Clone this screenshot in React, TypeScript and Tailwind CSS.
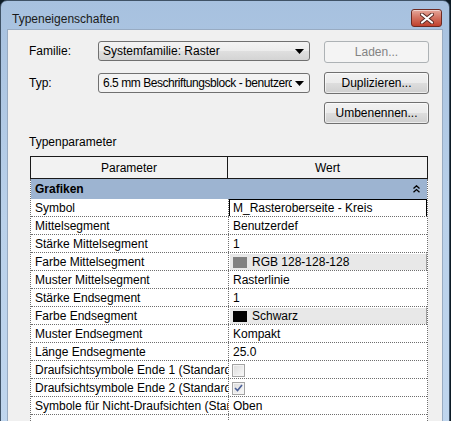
import React from "react";

function CloseButton() {
  return (
    <div className="w-[31px] h-[18px] rounded-[3px] border border-[#6d2a22] bg-gradient-to-b from-[#e5a89c] via-[#d2705f] to-[#c0402c] flex items-center justify-center shadow-[inset_0_1px_0_rgba(255,255,255,0.5)]">
      <svg width="14" height="11" viewBox="0 0 14 11">
        <path d="M2 1.5 L12 9.5 M12 1.5 L2 9.5" stroke="#5a2a24" strokeWidth="4" strokeLinecap="round" />
        <path d="M2 1.5 L12 9.5 M12 1.5 L2 9.5" stroke="#ffffff" strokeWidth="2.2" strokeLinecap="round" />
      </svg>
    </div>
  );
}

function Arrow() {
  return (
    <svg width="9" height="5" viewBox="0 0 9 5" className="shrink-0">
      <path d="M0 0 H9 L4.5 5 Z" fill="#000" />
    </svg>
  );
}

function Btn({ children, disabled }: { children: React.ReactNode; disabled?: boolean }) {
  if (disabled) {
    return (
      <div className="w-[105px] h-[22px] rounded-[3px] border border-[#adb2b5] bg-[#f4f4f4] flex items-center justify-center text-[#838383]">
        {children}
      </div>
    );
  }
  return (
    <div className="w-[105px] h-[22px] rounded-[3px] border border-[#707070] bg-[linear-gradient(to_bottom,#f2f2f2_0%,#ebebeb_50%,#dddddd_51%,#cfcfcf_100%)] flex items-center justify-center shadow-[inset_0_0_0_1px_rgba(255,255,255,0.6)]">
      {children}
    </div>
  );
}

function Row({ name, children }: { name: string; children?: React.ReactNode }) {
  return (
    <div className="flex h-[18px] border-b border-dotted border-[#6e6e6e]">
      <div className="w-[198px] shrink-0 border-r border-dotted border-[#6e6e6e] pl-[4px] leading-[18px] overflow-hidden whitespace-nowrap">
        {name}
      </div>
      <div className="flex-1 min-w-0 whitespace-nowrap overflow-hidden">{children}</div>
    </div>
  );
}

function Val({ text }: { text: string }) {
  return <div className="pl-[4px] leading-[18px]">{text}</div>;
}

function ColorVal({ color, text }: { color: string; text: string }) {
  return (
    <div className="h-[17px] bg-[#e8e8e8] border-t border-l border-white border-r border-r-[#a0a0a0] flex items-center pl-[3px] gap-[5px]">
      <div className="w-[14px] h-[11px]" style={{ background: color }} />
      <span className="leading-[17px] mt-[1px]">{text}</span>
    </div>
  );
}

function Check({ checked }: { checked?: boolean }) {
  return (
    <div className="h-[17px] flex items-center pl-[3px] pt-[1px]">
      <div className="w-[13px] h-[13px] border border-[#a4a4a4] bg-[#f4f4f4] p-[1px]">
        <div className="w-full h-full bg-gradient-to-br from-[#dedede] to-[#f7f7f7] flex items-center justify-center">
          {checked && (
            <svg width="9" height="8" viewBox="0 0 9 8">
              <path d="M1 4 L3.5 6.5 L8 1" stroke="#4a5f97" strokeWidth="1.6" fill="none" />
            </svg>
          )}
        </div>
      </div>
    </div>
  );
}

export default function App() {
  return (
    <div className="w-[451px] h-[421px] overflow-hidden bg-[#0d1b26] font-['Liberation_Sans',Arial,sans-serif] text-[12px] text-black">
      <div className="w-[450px] h-[440px] rounded-t-[7px] border border-[#3f5266] bg-gradient-to-b from-[#a7c1df] via-[#bad1ea] to-[#c0d6ee] flex flex-col">
        <div className="h-[28px] shrink-0 flex items-start pt-[8px] pl-[11px] pr-[7px]">
          <span className="flex-1 leading-[16px] mt-[2px] text-[#1a1a1a]">Typeneigenschaften</span>
          <CloseButton />
        </div>
        <div className="mx-[6px] flex-1 border border-[#98abc2] bg-[#f0f0f0] flex flex-col pl-[21px] pt-[11px]">
          <div className="flex items-start h-[22px]">
            <div className="w-[69px] leading-[20px]">Familie:</div>
            <div className="w-[212px] h-[20px] rounded-[3px] border border-[#707070] bg-[linear-gradient(to_bottom,#f3f3f3_0%,#ececec_50%,#dfdfdf_51%,#d4d4d4_100%)] flex items-center pl-[4px] pr-[5px]">
              <span className="flex-1">Systemfamilie: Raster</span>
              <Arrow />
            </div>
            <div className="ml-[14px]">
              <Btn disabled>Laden...</Btn>
            </div>
          </div>
          <div className="flex items-start h-[22px] mt-[9px]">
            <div className="w-[69px] leading-[22px]">Typ:</div>
            <div className="w-[212px] h-[20px] mt-[1px] rounded-[3px] border border-[#707070] bg-[#f3f3f3] flex items-center pl-[4px] pr-[5px]">
              <span className="flex-1 overflow-hidden whitespace-nowrap tracking-[-0.45px]">6.5 mm Beschriftungsblock - benutzerdefiniert</span>
              <div className="w-[12px] flex justify-end">
                <Arrow />
              </div>
            </div>
            <div className="ml-[14px]">
              <Btn>Duplizieren...</Btn>
            </div>
          </div>
          <div className="flex mt-[8px] pl-[295px]">
            <Btn>Umbenennen...</Btn>
          </div>
          <div className="mt-[10px] leading-[16px]">Typenparameter</div>
          <div className="mt-[6px] ml-[1px] w-[398px] flex flex-col">
            <div className="flex h-[23px] border border-[#1a1a1a] bg-[#f2f2f2]">
              <div className="w-[197px] border-r border-[#1a1a1a] flex items-center justify-center">Parameter</div>
              <div className="flex-1 flex items-center justify-center">Wert</div>
            </div>
            <div className="flex flex-col border-l border-r border-dotted border-[#6e6e6e] bg-white">
              <div className="h-[20px] bg-[#9db4d1] flex items-center pl-[4px] pr-[7px]">
                <span className="flex-1 font-bold">Grafiken</span>
                <svg width="7" height="8" viewBox="0 0 7 8">
                  <path d="M0.5 3.5 L3.5 0.8 L6.5 3.5 M0.5 7.2 L3.5 4.5 L6.5 7.2" stroke="#000" strokeWidth="1.3" fill="none" />
                </svg>
              </div>
              <Row name="Symbol">
                <div className="h-[18px] border border-black pl-[3px] leading-[16px]">M_Rasteroberseite - Kreis</div>
              </Row>
              <Row name="Mittelsegment"><Val text="Benutzerdef" /></Row>
              <Row name="Stärke Mittelsegment"><Val text="1" /></Row>
              <Row name="Farbe Mittelsegment"><ColorVal color="#808080" text="RGB 128-128-128" /></Row>
              <Row name="Muster Mittelsegment"><Val text="Rasterlinie" /></Row>
              <Row name="Stärke Endsegment"><Val text="1" /></Row>
              <Row name="Farbe Endsegment"><ColorVal color="#000000" text="Schwarz" /></Row>
              <Row name="Muster Endsegment"><Val text="Kompakt" /></Row>
              <Row name="Länge Endsegmente"><Val text="25.0" /></Row>
              <Row name="Draufsichtsymbole Ende 1 (Standard)"><Check /></Row>
              <Row name="Draufsichtsymbole Ende 2 (Standard)"><Check checked /></Row>
              <Row name="Symbole für Nicht-Draufsichten (Standard)"><Val text="Oben" /></Row>
              <Row name=""><Val text="" /></Row>
            </div>
          </div>
        </div>
      </div>
    </div>
  );
}
